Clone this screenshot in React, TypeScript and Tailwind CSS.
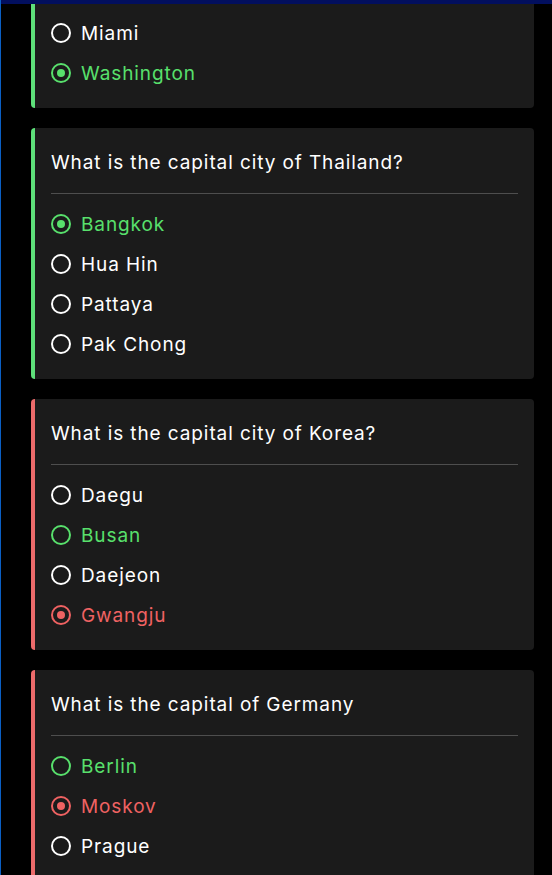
import React from 'react';

type Option = { label: string; state: 'none' | 'picked-right' | 'picked-wrong' | 'answer' };
type Question = { q?: string; correct: boolean; options: Option[] };

// first card is scrolled under the top bar, only its last two answers show
const questions: Question[] = [
  {
    correct: true,
    options: [
      { label: 'Miami', state: 'none' },
      { label: 'Washington', state: 'picked-right' },
    ],
  },
  {
    q: 'What is the capital city of Thailand?',
    correct: true,
    options: [
      { label: 'Bangkok', state: 'picked-right' },
      { label: 'Hua Hin', state: 'none' },
      { label: 'Pattaya', state: 'none' },
      { label: 'Pak Chong', state: 'none' },
    ],
  },
  {
    q: 'What is the capital city of Korea?',
    correct: false,
    options: [
      { label: 'Daegu', state: 'none' },
      { label: 'Busan', state: 'answer' },
      { label: 'Daejeon', state: 'none' },
      { label: 'Gwangju', state: 'picked-wrong' },
    ],
  },
  {
    q: 'What is the capital of Germany',
    correct: false,
    options: [
      { label: 'Berlin', state: 'answer' },
      { label: 'Moskov', state: 'picked-wrong' },
      { label: 'Prague', state: 'none' },
    ],
  },
];

function Radio({ state }: { state: Option['state'] }) {
  const ring =
    state === 'none' ? 'border-white' : state === 'picked-wrong' ? 'border-[#ef6262]' : 'border-[#58e06c]';
  const dot = state === 'picked-right' ? 'bg-[#58e06c]' : state === 'picked-wrong' ? 'bg-[#ef6262]' : '';
  return (
    <span className={`w-5 h-5 rounded-full border-2 ${ring} flex items-center justify-center shrink-0`}>
      {dot && <span className={`w-2 h-2 rounded-full ${dot}`} />}
    </span>
  );
}

export default function App() {
  return (
    <div
      className="h-[875px] w-[552px] overflow-hidden bg-black border-l border-[#0b5fc4] flex flex-col"
      style={{ fontFamily: 'Inter, "Noto Sans", sans-serif' }}
    >
      <div className="h-1 bg-[#020f5e] shrink-0" />
      <div className="flex-1 overflow-hidden pl-[30px] pr-[18px] flex flex-col gap-5">
        {questions.map((item, i) => (
          <div
            key={i}
            className={`bg-[#1b1b1b] border-l-4 ${item.correct ? 'border-[#5ee07a]' : 'border-[#ec6b6b]'} px-4 pb-[15px] shrink-0 ${item.q ? 'pt-5 rounded' : 'pt-[9px] rounded-b'}`}
          >
            {item.q && (
              <>
                <p className="text-white text-[19px] leading-[30px] tracking-[0.9px]">{item.q}</p>
                <div className="h-px bg-[#4e4e4e] mt-[15px] mb-[10px]" />
              </>
            )}
            {item.options.map(opt => {
              const color =
                opt.state === 'none' ? 'text-white' : opt.state === 'picked-wrong' ? 'text-[#ef6262]' : 'text-[#58e06c]';
              return (
                <div key={opt.label} className="h-10 flex items-center gap-[10px]">
                  <Radio state={opt.state} />
                  <span className={`${color} text-[19px] tracking-[0.9px] pt-0.5`}>{opt.label}</span>
                </div>
              );
            })}
          </div>
        ))}
      </div>
    </div>
  );
}
